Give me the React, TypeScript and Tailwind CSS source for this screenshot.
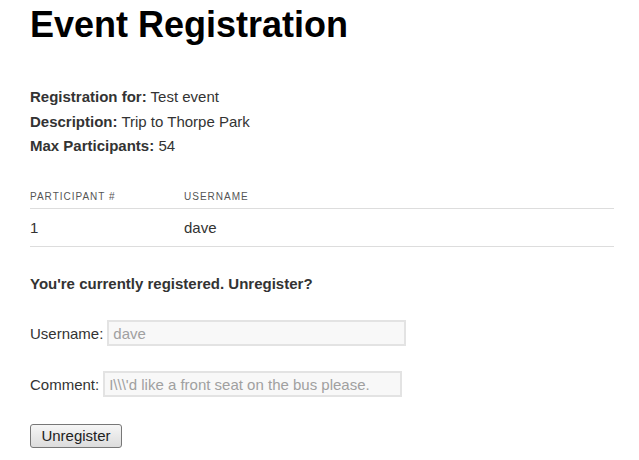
export default function App() {
  return (
    <div className="bg-white min-h-[460px] px-[30px] text-[#333] text-[15px]" style={{ fontFamily: '"Liberation Sans", Arial, sans-serif' }}>
      <h1 className="text-[36px] font-bold text-black leading-[40px] pt-[5px]">Event Registration</h1>
      <div className="mt-[40px] leading-[24.5px]">
        <div><span className="font-bold">Registration for:</span> Test event</div>
        <div><span className="font-bold">Description:</span> Trip to Thorpe Park</div>
        <div><span className="font-bold">Max Participants:</span> 54</div>
      </div>
      <table className="mt-[26px] w-[584px] border-collapse">
        <thead>
          <tr className="border-b border-[#ddd]">
            <th className="text-left font-normal text-[10px] tracking-[1px] text-[#555] uppercase w-[154px] h-[24px] align-middle">Participant #</th>
            <th className="text-left font-normal text-[10px] tracking-[1px] text-[#555] uppercase h-[24px] align-middle">Username</th>
          </tr>
        </thead>
        <tbody>
          <tr className="border-b border-[#ddd]">
            <td className="h-[38px] align-middle leading-[21px]">1</td>
            <td className="h-[38px] align-middle leading-[21px]">dave</td>
          </tr>
        </tbody>
      </table>
      <p className="font-bold mt-[26px] leading-[21px]">You're currently registered. Unregister?</p>
      <div className="mt-[26px] flex items-center gap-[4px] leading-[21px]">
        <label>Username:</label>
        <input readOnly value="dave" className="w-[299px] h-[26px] border-2 border-[#e3e3e3] bg-[#f8f8f8] text-[#a0a0a0] px-[4px] text-[15px] outline-none" />
      </div>
      <div className="mt-[25px] flex items-center gap-[4px] leading-[21px]">
        <label>Comment:</label>
        <input readOnly value={"I\\\\\\'d like a front seat on the bus please."} className="w-[299px] h-[26px] border-2 border-[#e3e3e3] bg-[#f8f8f8] text-[#a0a0a0] px-[4px] text-[15px] outline-none" />
      </div>
      <button className="mt-[27px] w-[92px] h-[24px] border border-[#777] rounded-[3px] bg-gradient-to-b from-[#f6f6f6] to-[#dcdcdc] text-[15px] leading-[20px] text-[#222]">Unregister</button>
    </div>
  );
}
